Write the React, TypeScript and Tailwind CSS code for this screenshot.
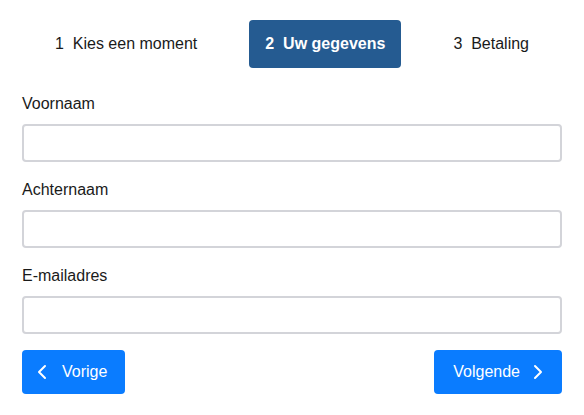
import { ChevronLeft, ChevronRight } from "lucide-react";

const steps = [
  { nr: 1, label: "Kies een moment" },
  { nr: 2, label: "Uw gegevens" },
  { nr: 3, label: "Betaling" },
];

const fields = ["Voornaam", "Achternaam", "E-mailadres"];

export default function App() {
  const active = 2;
  return (
    <div
      className="min-h-[415px] w-[584px] bg-white px-[22px] pt-5 text-[16px] text-[#1a1a1a]"
      style={{ fontFamily: "'Liberation Sans', Arial, sans-serif" }}
    >
      <div className="flex justify-center gap-9">
        {steps.map((s) => (
          <div
            key={s.nr}
            className={
              s.nr === active
                ? "rounded-[4px] bg-[#255b91] px-4 py-3 font-bold leading-6 text-white"
                : "px-4 py-3 leading-6"
            }
          >
            {s.nr}&nbsp; {s.label}
          </div>
        ))}
      </div>

      <form className="mt-6">
        {fields.map((f) => (
          <div key={f} className="mb-4">
            <label className="block leading-6">{f}</label>
            <input
              type="text"
              className="mt-2 block h-[38px] w-full rounded-[4px] border-2 border-[#d3d4d9] bg-white px-3 outline-none"
            />
          </div>
        ))}

        <div className="flex justify-between">
          <button
            type="button"
            className="flex h-[44px] items-center gap-2 rounded-[4px] bg-[#0a7cff] pl-2 pr-[18px] text-white"
          >
            <ChevronLeft size={24} strokeWidth={2} />
            <span>Vorige</span>
          </button>
          <button
            type="button"
            className="flex h-[44px] items-center gap-[6px] rounded-[4px] bg-[#0a7cff] pl-[19px] pr-3 text-white"
          >
            <span>Volgende</span>
            <ChevronRight size={24} strokeWidth={2} />
          </button>
        </div>
      </form>
    </div>
  );
}
